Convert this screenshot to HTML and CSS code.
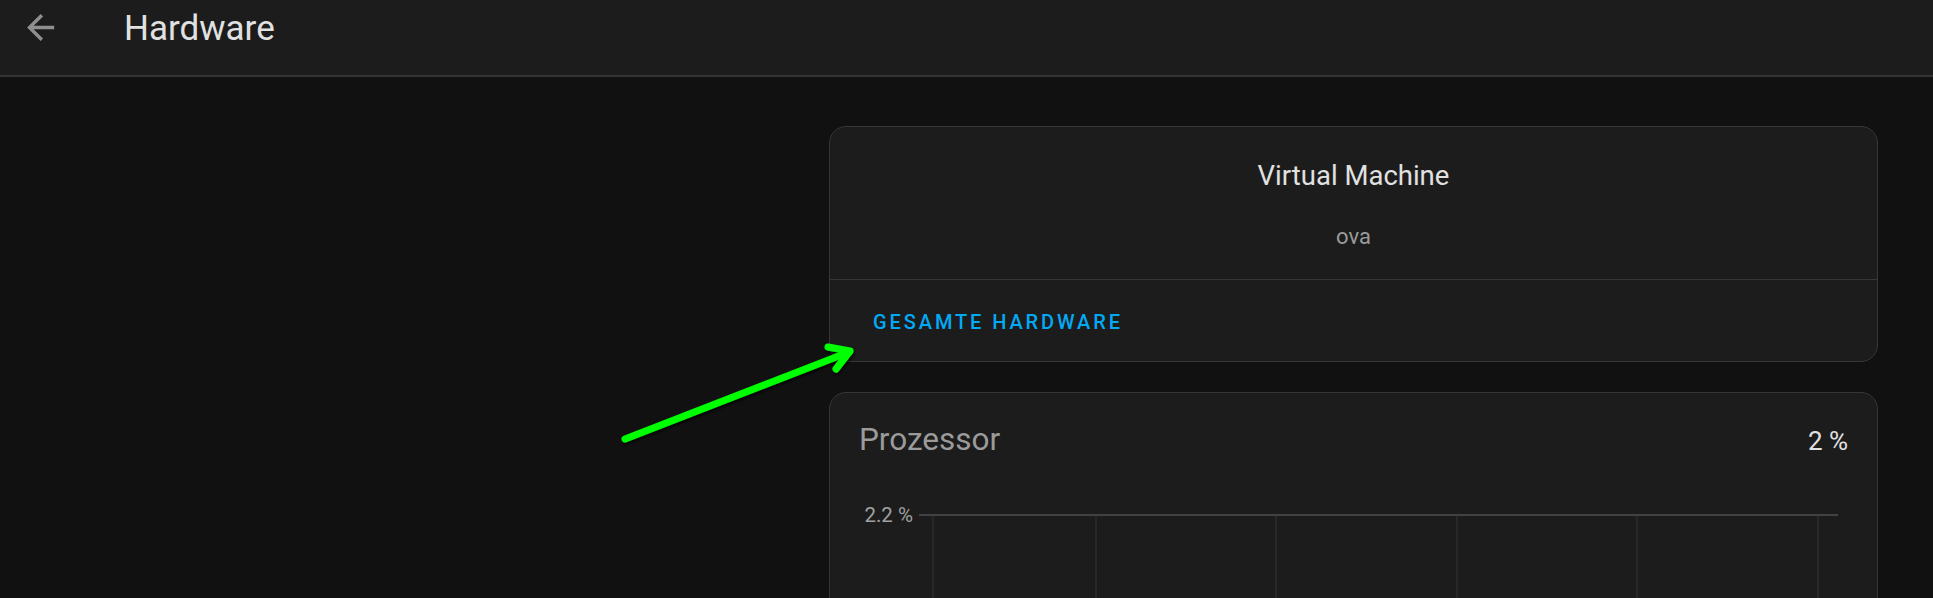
FILE: index.html
```html
<!DOCTYPE html>
<html lang="de">
<head>
  <meta charset="UTF-8" />
  <meta name="viewport" content="width=device-width, initial-scale=1.0"/>
  <title>Hardware</title>
  <link rel="stylesheet" href="styles.css">
</head>
<body>

  <header class="toolbar">
    <button class="back" aria-label="Zurück">
      <svg viewBox="0 0 24 24" width="41" height="41"><path d="M20,11V13H8L13.5,18.5L12.08,19.92L4.16,12L12.08,4.08L13.5,5.5L8,11H20Z"/></svg>
    </button>
    <div class="title">Hardware</div>
  </header>

  <main class="content">
    <div class="column">

      <div class="card">
        <div class="board">
          <div class="board-name">Virtual Machine</div>
          <div class="board-id">ova</div>
        </div>
        <div class="card-actions">
          <button class="text-button">Gesamte Hardware</button>
        </div>
      </div>

      <div class="card">
        <div class="metric-header">
          <div class="metric-name">Prozessor</div>
          <div class="metric-value">2 %</div>
        </div>
        <svg class="chart" width="1047" height="160">
          <text class="axis-label" x="83" y="62" text-anchor="end">2.2 %</text>
          <line class="grid-h" x1="89" y1="55" x2="1008" y2="55"/>
          <line class="grid-v" x1="103" y1="55" x2="103" y2="160"/>
          <line class="grid-v" x1="266" y1="55" x2="266" y2="160"/>
          <line class="grid-v" x1="446" y1="55" x2="446" y2="160"/>
          <line class="grid-v" x1="627" y1="55" x2="627" y2="160"/>
          <line class="grid-v" x1="807" y1="55" x2="807" y2="160"/>
          <line class="grid-v" x1="988" y1="55" x2="988" y2="160"/>
        </svg>
      </div>

    </div>
  </main>

  <!-- annotation -->
  <svg class="annotation" width="1933" height="598">
    <defs>
      <filter id="shadow" x="-10%" y="-10%" width="120%" height="120%">
        <feDropShadow dx="1" dy="2" stdDeviation="1.5" flood-color="#000" flood-opacity="0.8"/>
      </filter>
    </defs>
    <g filter="url(#shadow)">
      <line x1="625" y1="439" x2="849" y2="352"/>
      <polyline points="828,347 850,351 836,369"/>
    </g>
  </svg>

</body>
</html>
```

FILE: styles.css
```css
body {
  margin: 0;
  background-color: #111111;
  color: #e1e1e1;
  font-family: Roboto, "Noto Sans", sans-serif;
  overflow: hidden;
}

.toolbar {
  height: 77px;
  display: flex;
  align-items: flex-start;
  gap: 63px;
  padding: 8px 0 0 20px;
  box-sizing: border-box;
  background-color: #1c1c1c;
  border-bottom: 2px solid #333333;
}

.back {
  margin-top: -1px;
  padding: 0;
  border: none;
  background: none;
  display: flex;
}

.back svg {
  fill: #8f8f8f;
}

.title {
  font-size: 35px;
  line-height: 42px;
  color: #e1e1e1;
}

.content {
  display: flex;
  padding: 49px 55px 0 829px;
}

.column {
  width: 1049px;
  display: flex;
  flex-direction: column;
  gap: 30px;
}

.card {
  background-color: #1c1c1c;
  border: 1px solid #363636;
  border-radius: 17px;
  overflow: hidden;
}

.board {
  padding: 33px 0 29px;
  display: flex;
  flex-direction: column;
  align-items: center;
  gap: 32px;
}

.board-name {
  font-size: 27.5px;
  line-height: 32px;
  color: #e1e1e1;
}

.board-id {
  font-size: 22px;
  line-height: 26px;
  color: #9b9b9b;
}

.card-actions {
  border-top: 1px solid #363636;
  padding: 30px 0 27px 43px;
}

.text-button {
  padding: 0;
  border: none;
  background: none;
  font-family: Roboto, sans-serif;
  font-weight: 500;
  font-size: 20px;
  line-height: 24px;
  letter-spacing: 2.9px;
  text-transform: uppercase;
  color: #03a9f4;
  cursor: pointer;
}

.metric-header {
  display: flex;
  justify-content: space-between;
  align-items: baseline;
  padding: 27px 29px 0 29px;
}

.metric-name {
  font-size: 31.5px;
  line-height: 40px;
  color: #9b9b9b;
}

.metric-value {
  font-size: 26px;
  color: #e1e1e1;
}

.chart {
  display: block;
}

.axis-label {
  font-family: Roboto, sans-serif;
  font-size: 20.5px;
  fill: #a0a0a0;
}

.grid-h {
  stroke: #424242;
  stroke-width: 2;
}

.grid-v {
  stroke: #353535;
  stroke-width: 1;
}

.annotation {
  position: absolute;
  top: 0;
  left: 0;
  pointer-events: none;
}

.annotation line,
.annotation polyline {
  fill: none;
  stroke: #00ff00;
  stroke-width: 7;
  stroke-linecap: round;
  stroke-linejoin: round;
}
```
